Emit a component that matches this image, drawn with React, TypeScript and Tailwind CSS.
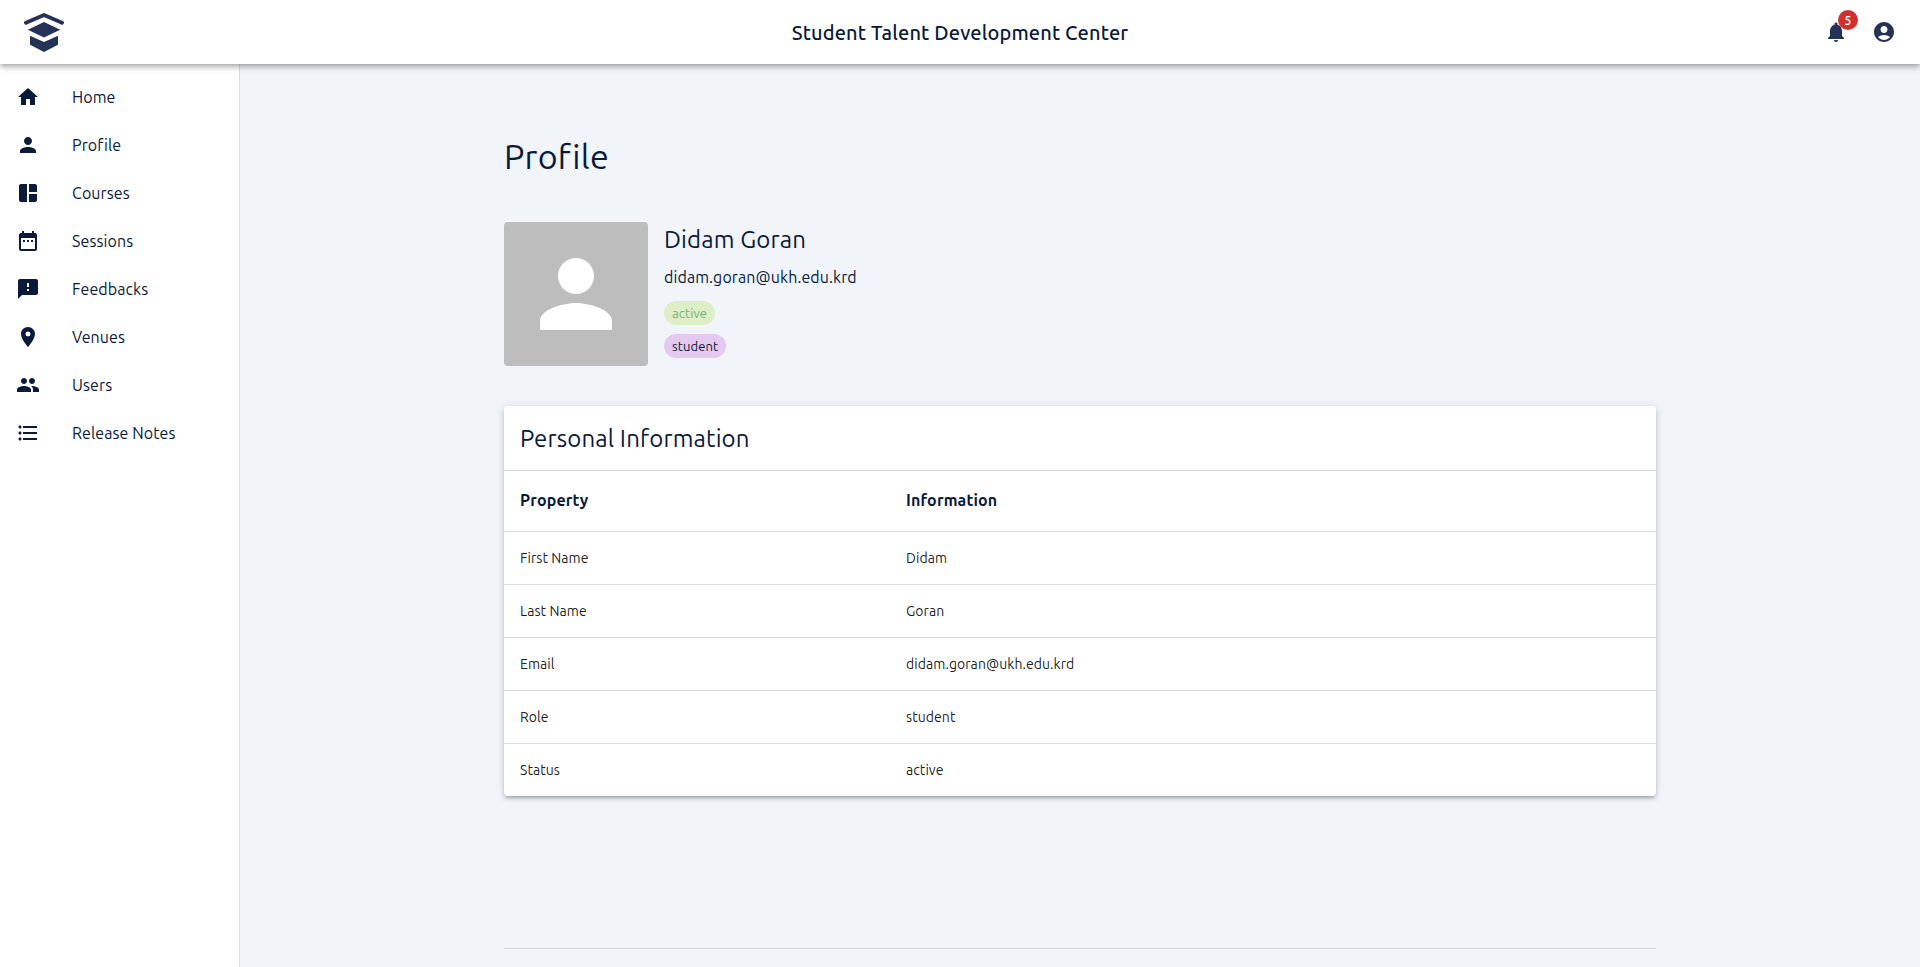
import type { ReactNode } from "react";
import type { IconType } from "react-icons";
import {
  MdAccountCircle,
  MdDateRange,
  MdFeedback,
  MdFormatListBulleted,
  MdHome,
  MdNotifications,
  MdPeople,
  MdPerson,
  MdPlace,
} from "react-icons/md";

function CoursesIcon({ size = 24 }: { size?: number | string }) {
  return (
    <svg width={size} height={size} viewBox="0 0 24 24" fill="currentColor">
      <path d="M11 21H5c-1.1 0-2-.9-2-2V5c0-1.1.9-2 2-2h6v18zm2 0h6c1.1 0 2-.9 2-2v-6h-8v8zm8-10V5c0-1.1-.9-2-2-2h-6v8h8z" />
    </svg>
  );
}

function Logo() {
  return (
    <svg width="40" height="40" viewBox="0 0 40 40" className="text-[#233255]">
      <path
        d="M2 10.800L20 3l18 7.800"
        fill="none"
        stroke="currentColor"
        strokeWidth="3.900"
        strokeLinecap="round"
        strokeLinejoin="round"
      />
      <path d="M20 10l16.200 7.700L20 25.500 3.800 17.700z" fill="currentColor" />
      <path d="M6 23.700l14 6.200 14-6.200v9L20 40 6 32.700z" fill="currentColor" />
    </svg>
  );
}

const navigation: { label: string; icon: IconType | typeof CoursesIcon }[] = [
  { label: "Home", icon: MdHome },
  { label: "Profile", icon: MdPerson },
  { label: "Courses", icon: CoursesIcon },
  { label: "Sessions", icon: MdDateRange },
  { label: "Feedbacks", icon: MdFeedback },
  { label: "Venues", icon: MdPlace },
  { label: "Users", icon: MdPeople },
  { label: "Release Notes", icon: MdFormatListBulleted },
];

const details = [
  ["First Name", "Didam"],
  ["Last Name", "Goran"],
  ["Email", "didam.goran@ukh.edu.krd"],
  ["Role", "student"],
  ["Status", "active"],
];

function Header() {
  return (
    <header className="relative z-10 grid h-16 shrink-0 grid-cols-[1fr_auto_1fr] items-center bg-white px-6 shadow-[0px_2px_4px_-1px_rgba(0,0,0,0.2),0px_4px_5px_0px_rgba(0,0,0,0.14),0px_1px_10px_0px_rgba(0,0,0,0.12)]">
      <Logo />
      <h1 className="pt-0.5 text-xl leading-8 font-medium tracking-[0.0075em]">
        Student Talent Development Center
      </h1>
      <div className="flex items-center justify-end gap-6 text-[#233255]">
        <div className="relative">
          <MdNotifications size={24} />
          <span className="absolute -top-2.5 left-3.5 flex size-5 items-center justify-center rounded-full bg-[#d32f2f] pt-px text-xs leading-none font-medium text-white">
            5
          </span>
        </div>
        <MdAccountCircle size={24} />
      </div>
    </header>
  );
}

function Sidebar() {
  return (
    <nav className="w-60 shrink-0 border-r border-[#dcdcdc] bg-white pt-[9px]">
      {navigation.map(({ label, icon: Icon }) => (
        <a key={label} className="flex h-12 items-center gap-8 px-4">
          <Icon size={24} />
          <span className="tracking-[0.006em]">{label}</span>
        </a>
      ))}
    </nav>
  );
}

function Chip({ className, children }: { className: string; children: ReactNode }) {
  return (
    <span
      className={`flex h-6 items-center rounded-full px-2 pt-0.5 text-[13px] tracking-[0.008em] ${className}`}
    >
      {children}
    </span>
  );
}

function PersonalInformation() {
  return (
    <section className="mt-10 overflow-hidden rounded bg-white shadow-[0px_3px_3px_-2px_rgba(0,0,0,0.2),0px_3px_4px_0px_rgba(0,0,0,0.14),0px_1px_8px_0px_rgba(0,0,0,0.12)]">
      <h2 className="px-4 pt-[17px] pb-[15px] text-2xl leading-8 tracking-[0.00625em]">
        Personal Information
      </h2>
      <div className="grid h-[62px] grid-cols-[386px_1fr] border-y border-[#d8d8d8] pt-[17px] leading-6 font-bold tracking-[0.00938em]">
        <div className="px-4">Property</div>
        <div className="px-4">Information</div>
      </div>
      {details.map(([property, value]) => (
        <div
          key={property}
          className="grid grid-cols-[386px_1fr] border-b border-[#dcdcdc] py-4 text-sm leading-5 tracking-[0.005em] text-black/90 last:border-b-0"
        >
          <div className="px-4">{property}</div>
          <div className="px-4">{value}</div>
        </div>
      ))}
    </section>
  );
}

export default function App() {
  return (
    <div className="flex h-screen flex-col overflow-hidden bg-[#f1f5fa] font-['Ubuntu','Noto_Sans',sans-serif] text-base text-[#0a1a3a]">
      <Header />
      <div className="flex min-h-0 grow">
        <Sidebar />
        <main className="flex grow justify-center">
          <div className="flex w-[1152px] flex-col pt-[71px]">
            <h1 className="text-[34px] leading-[42px] tracking-[0.007em]">Profile</h1>
            <div className="mt-[45px] flex gap-4">
              <div className="flex size-36 items-center justify-center rounded bg-[#bdbdbd] text-white">
                <MdPerson size={108} />
              </div>
              <div className="flex flex-col items-start pt-0.5">
                <h2 className="text-2xl leading-8 tracking-[0.00625em]">Didam Goran</h2>
                <p className="mt-[9px] leading-6 tracking-[0.006em]">didam.goran@ukh.edu.krd</p>
                <div className="mt-3 flex flex-col items-start gap-[9px]">
                  <Chip className="bg-[#deefc8] text-[#74b278]">active</Chip>
                  <Chip className="bg-[#e6c9f0]">student</Chip>
                </div>
              </div>
            </div>
            <PersonalInformation />
            <hr className="mt-[152px] border-[#d5d8dc]" />
          </div>
        </main>
      </div>
    </div>
  );
}
